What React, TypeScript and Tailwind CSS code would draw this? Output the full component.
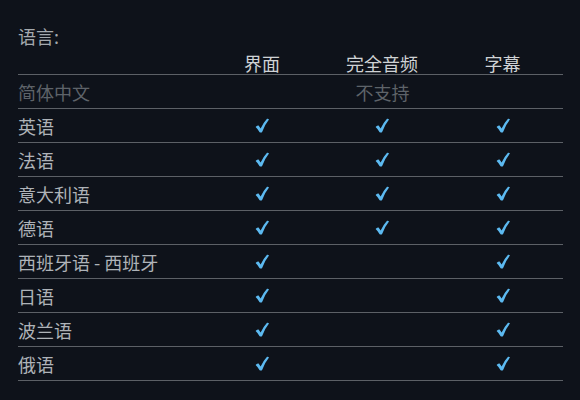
import React from "react";

type Lang = {
  name: string;
  ui: boolean;
  audio: boolean;
  subs: boolean;
  unsupported?: boolean;
};

const langs: Lang[] = [
  { name: "简体中文", ui: false, audio: false, subs: false, unsupported: true },
  { name: "英语", ui: true, audio: true, subs: true },
  { name: "法语", ui: true, audio: true, subs: true },
  { name: "意大利语", ui: true, audio: true, subs: true },
  { name: "德语", ui: true, audio: true, subs: true },
  { name: "西班牙语 - 西班牙", ui: true, audio: false, subs: true },
  { name: "日语", ui: true, audio: false, subs: true },
  { name: "波兰语", ui: true, audio: false, subs: true },
  { name: "俄语", ui: true, audio: false, subs: true },
];

// heavy check, tapered like the ✔ glyph
const Check = () => (
  <svg width="16" height="17" viewBox="0 0 16 17" className="text-[#5cb9f0]">
    <path
      d="M1.6 10 Q3.4 8.4 4.6 8.6 L6.6 11.6 Q9.6 5.4 13 1.8 Q14.4 1.6 15 2.6 Q10.6 8 8 15.2 Q7 16 5.6 15.2 Q4 12.2 1.6 10 Z"
      fill="currentColor"
    />
  </svg>
);

const Cell = ({ on }: { on: boolean }) => (
  <div className="flex items-center justify-center">{on && <Check />}</div>
);

export default function App() {
  return (
    <div
      className="w-[580px] h-[400px] bg-[#0e121a] pt-[25px] px-[18px] text-[18px]"
      style={{ fontFamily: '"Noto Sans CJK SC", "Noto Sans", sans-serif' }}
    >
      <div className="h-[22px] leading-[22px] text-[#a4a9ae]">语言:</div>
      <div className="w-[545px]">
        <div className="grid grid-cols-[184px_120px_120px_1fr] h-[28px] items-end border-b border-[#5c6066] text-[#cfd2d5] leading-[22px]">
          <div />
          <div className="text-center">界面</div>
          <div className="text-center">完全音频</div>
          <div className="text-center">字幕</div>
        </div>
        {langs.map((l) => (
          <div
            key={l.name}
            className="grid grid-cols-[184px_120px_120px_1fr] h-[34px] items-center border-b border-[#5c6066] leading-[22px]"
          >
            <div className={l.unsupported ? "text-[#5e6369]" : "text-[#aeb3b8]"}>
              {l.name}
            </div>
            {l.unsupported ? (
              <div className="col-span-3 text-center text-[#5e6369]">不支持</div>
            ) : (
              <>
                <Cell on={l.ui} />
                <Cell on={l.audio} />
                <Cell on={l.subs} />
              </>
            )}
          </div>
        ))}
      </div>
    </div>
  );
}
